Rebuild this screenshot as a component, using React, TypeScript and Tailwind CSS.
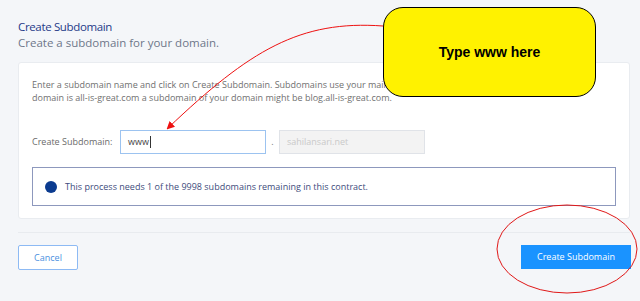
export default function App() {
  return (
    <div
      className="relative w-[640px] h-[301px] overflow-hidden bg-[#f4f6f9] px-[18px] pt-[19px]"
      style={{ fontFamily: '"Open Sans", "Noto Sans", sans-serif' }}
    >
      <div className="text-[11.5px] leading-[16px] tracking-[-0.35px] text-[#1f3a88]">Create Subdomain</div>
      <div className="text-[11.5px] leading-[16px] text-[#6e7789]">Create a subdomain for your domain.</div>

      <div className="mt-[11px] w-[612px] rounded-[3px] border border-[#e9ecf0] bg-white px-[13px] pt-[15px] pb-[12px]">
        <p className="text-[9px] leading-[13px] text-[#707070]">
          Enter a subdomain name and click on Create Subdomain. Subdomains use your main domain name. For example, if your
          <br />
          domain is all-is-great.com a subdomain of your domain might be blog.all-is-great.com.
        </p>

        <div className="mt-[26px] flex items-center">
          <span className="w-[88px] text-[9px] text-[#6a6a6a]">Create Subdomain:</span>
          <div className="flex h-[24px] w-[146px] items-center border border-[#9cc3f0] px-[7px] text-[9px] text-[#444]">
            www<span className="ml-[1px] h-[12px] w-px bg-[#333]" />
          </div>
          <span className="w-[13px] text-center text-[9px] text-[#777]">.</span>
          <div className="flex h-[24px] w-[146px] items-center border border-[#e0e3e8] bg-[#f3f3f3] px-[7px] text-[9px] text-[#c9c9c9]">
            sahilansari.net
          </div>
        </div>

        <div className="mt-[13px] flex h-[39px] items-center gap-[8px] border border-[#8d98bd] pl-[12px]">
          <span className="h-[12px] w-[12px] rounded-full bg-[#0b3b8f]" />
          <span className="text-[9px] text-[#3e4c7c]">
            This process needs 1 of the 9998 subdomains remaining in this contract.
          </span>
        </div>
      </div>

      <div className="mt-[13px] h-px w-[612px] bg-[#e8ebef]" />

      <div className="mt-[12px] flex w-[613px] justify-between">
        <button className="h-[25px] w-[60px] rounded-[2px] border border-[#8dbaf4] bg-white text-[9px] text-[#4a8fe0]">
          Cancel
        </button>
        <button className="h-[24px] w-[110px] bg-[#1a93ff] text-[9px] text-white">Create Subdomain</button>
      </div>

      <svg className="pointer-events-none absolute left-0 top-0" width="640" height="301">
        <defs>
          <marker id="ah" markerWidth="8" markerHeight="8" refX="6" refY="4" orient="auto" markerUnits="userSpaceOnUse">
            <path d="M0,0 L8,4 L0,8 Z" fill="#ee1111" />
          </marker>
        </defs>
        <path d="M383,26 C300,20 250,50 168,128" fill="none" stroke="#ee1111" strokeWidth="1" markerEnd="url(#ah)" />
        <ellipse cx="567" cy="249" rx="70" ry="44" fill="none" stroke="#e01818" strokeWidth="1" />
      </svg>

      <div
        className="absolute left-[383px] top-[7px] flex h-[90px] w-[213px] items-center justify-center rounded-[20px] border border-black bg-[#fff200] text-[14px] font-bold text-black"
        style={{ fontFamily: '"Liberation Sans", Arial, sans-serif' }}
      >
        Type www here
      </div>
    </div>
  );
}
